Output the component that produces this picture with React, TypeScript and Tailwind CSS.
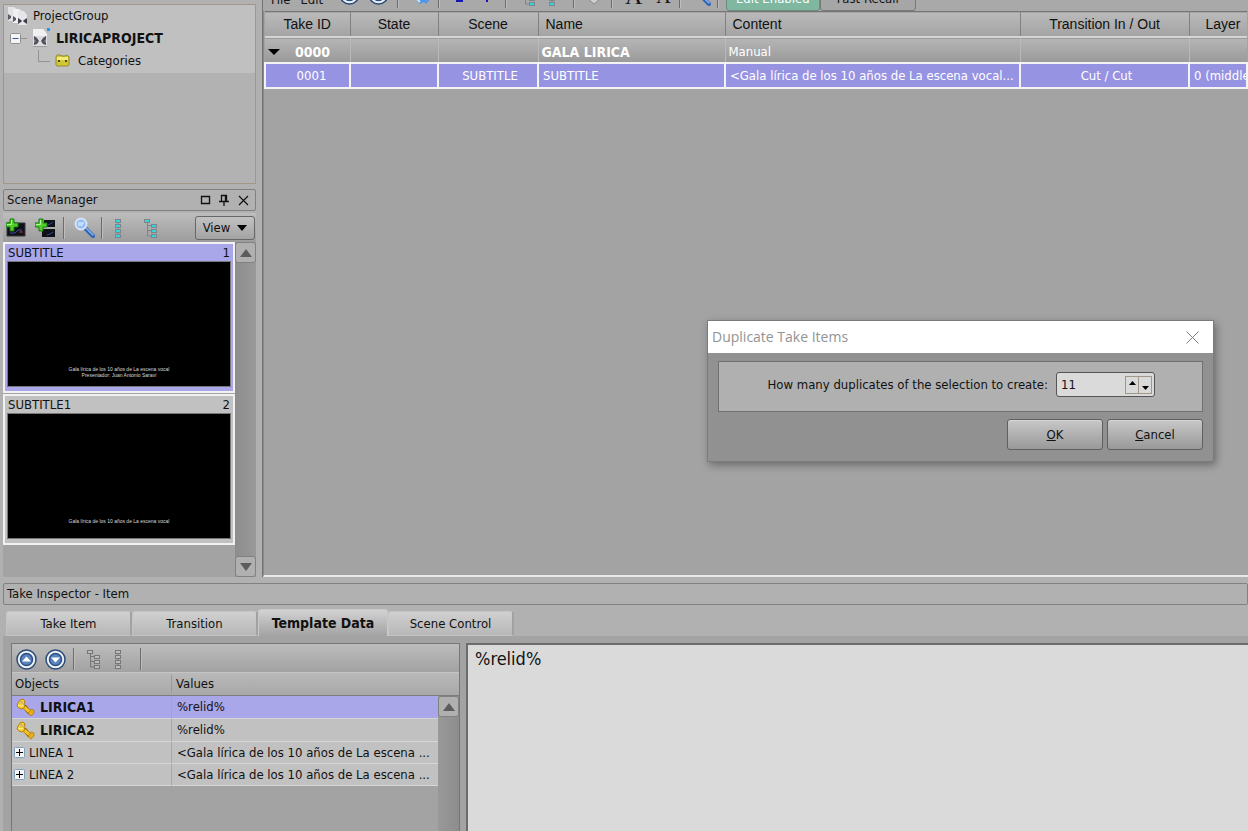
import { useState, type ReactNode } from 'react'

const scenes = [
  { name: 'SUBTITLE', num: 1, lines: ['Gala lírica de los 10 años de La escena vocal', 'Presentador: Juan Antonio Saraví'], selected: true },
  { name: 'SUBTITLE1', num: 2, lines: ['Gala lírica de los 10 años de La escena vocal'], selected: false },
]

const tabs = ['Take Item', 'Transition', 'Template Data', 'Scene Control']

const objects = [
  { name: 'LIRICA1', value: '%relid%', key: true },
  { name: 'LIRICA2', value: '%relid%', key: true },
  { name: 'LINEA 1', value: '<Gala lírica de los 10 años de La escena ...', key: false },
  { name: 'LINEA 2', value: '<Gala lírica de los 10 años de La escena ...', key: false },
]

function Separator({ className = 'h-[22px]' }: { className?: string }) {
  return <span className={`w-[2px] shrink-0 border-l border-[#6c6c6c] bg-[#bdbdbd] ${className}`} />
}

function ProjectIcon() {
  return (
    <svg className="h-[20px] w-[18px]" viewBox="0 0 18 20">
      <path d="M1 1h10l4 5v13H1z" fill="#dcdce0" />
      <path d="M1 1h10l4 5v2H1z" fill="#f0f0f2" />
      <path d="M2 8l3 2 2 3-2 3-3 1zM14 8l-3 2-2 3 2 3 3 1z" fill="#50505a" />
      <path d="M2 11l2 2-2 2zM14 11l-2 2 2 2z" fill="#8a8a94" />
      <path d="M1 18.500h14" stroke="#9b9ba1" />
      <path d="M15 0h3v3h-3z" fill="#1c9cf2" />
    </svg>
  )
}

function GroupIcon() {
  return (
    <svg className="h-[20px] w-[21px]" viewBox="0 0 21 20">
      <path d="M1 1h6l4 3v11H1z" fill="#e2e2e5" />
      <path d="M1 8l3 2v2l-3 2z" fill="#5d5d67" />
      <path d="M6 3h6l4 3v11H6z" fill="#f0f0f3" />
      <path d="M6 10l3 2v2l-3 2z" fill="#5d5d67" />
      <path d="M11 5h6l3 4v10h-9z" fill="#e6e6ea" />
      <path d="M11 12l3 2 1 1-1 1-3 2zM20 12l-3 2-1 1 1 1 3 2z" fill="#40404a" />
    </svg>
  )
}

function FolderIcon() {
  return (
    <svg className="h-[13px] w-[15px]" viewBox="0 0 15 13">
      <path d="M1 3l1-2h3l2 1h3l2-1 2 2v8l-1 1H2l-1-1z" fill="#cfc832" stroke="#928b35" />
      <path d="M2 3h11v3H2z" fill="#f1ec7a" />
      <path d="M3 6h2v2H3zM10 6h2v2h-2z" fill="#4b4716" />
    </svg>
  )
}

function AddSceneIcon({ list = false }: { list?: boolean }) {
  return (
    <svg className="h-[20px] w-[20px]" viewBox="0 0 20 20">
      {list ? (
        <>
          <path d="M9 2h11v7H9zM7 11h13v8H7z" fill="#111118" />
          <path d="M13 7l2-1 3-2M12 17l3-1 3-2" stroke="#334a9c" fill="none" />
        </>
      ) : (
        <>
          <path d="M1 5h18v13H1z" fill="#111118" stroke="#34343a" />
          <path d="M4 15h5l3-3h4" stroke="#3a4ca8" fill="none" />
          <path d="M13 14h4" stroke="#a3393d" />
        </>
      )}
      <path d="M4 1h4v4h4v4H8v4H4V9H0V5h4z" fill="#4fd02b" stroke="#1c7a12" />
      <path d="M5.500 2v4.500H1" stroke="#b2f59a" fill="none" />
    </svg>
  )
}

function MagnifierIcon() {
  return (
    <svg className="h-[21px] w-[21px]" viewBox="0 0 21 21">
      <path d="M11 11l8 8" stroke="#2d62b5" strokeWidth="4" strokeLinecap="round" />
      <path d="M12 11l7 7" stroke="#86b4ec" strokeWidth="1.5" strokeLinecap="round" />
      <circle cx="7" cy="7" r="5.5" fill="#8fbdfa" stroke="#d9e2f2" strokeWidth="2" />
      <path d="M4 6h6M4 8h5" stroke="#f3f9ff" />
    </svg>
  )
}

// stacked boxes joined by a line
function StackIcon({ fill, stroke }: { fill: string; stroke: string }) {
  return (
    <svg className="h-[20px] w-[8px]" viewBox="0 0 8 20">
      {[1, 6, 11, 16].map(y => (
        <g key={y}>
          <rect x="1.5" y={y + 0.5} width="5" height="3" fill={fill} stroke={stroke} />
          <path d={`M4 ${y + 3}v2`} stroke={stroke} />
        </g>
      ))}
    </svg>
  )
}

function TreeIcon({ fill, stroke }: { fill: string; stroke: string }) {
  return (
    <svg className="h-[20px] w-[15px]" viewBox="0 0 15 20">
      <path d="M4.500 4v14h4M4.500 7.500h4M4.500 12.500h4" stroke={stroke} fill="none" />
      <rect x="1.500" y="1.500" width="5" height="3" fill={fill} stroke={stroke} />
      {[6, 11, 16].map(y => (
        <rect key={y} x="8.500" y={y + 0.5} width="5" height="3" fill={fill} stroke={stroke} />
      ))}
    </svg>
  )
}

function RoundArrow({ down = false }: { down?: boolean }) {
  return (
    <svg className="h-[21px] w-[21px]" viewBox="0 0 21 21">
      <circle cx="10.500" cy="10.500" r="9.500" fill="#edf2f8" stroke="#2c4a75" strokeWidth="1.500" />
      <circle cx="10.500" cy="10.500" r="6" fill="#5a85bd" stroke="#2c4f83" strokeWidth="1.500" />
      <path d={down ? 'M6 8.500h9l-4.500 5z' : 'M6 12.500h9l-4.500-5z'} fill="#fff" />
    </svg>
  )
}

function KeyIcon() {
  return (
    <svg className="h-[18px] w-[19px]" viewBox="0 0 19 18">
      <path d="M8 8l6 7" stroke="#96690a" strokeWidth="4.500" />
      <path d="M7 8l8 7" stroke="#f5c321" strokeWidth="3" />
      <path d="M12 15l3 3 3-3v-3l-3-1-1 2z" fill="#e8ae16" stroke="#a9760c" strokeWidth="0.700" />
      <path d="M1 8l1-3 2-3 3-1 2 2-1 3 1 3-3 2-3-1z" fill="#f8cd30" stroke="#b3810f" />
      <path d="M5 3l2 1-1 2-2-1z" fill="#b9b1a0" />
      <path d="M2 7l3 1 2-1" stroke="#fff09a" fill="none" />
    </svg>
  )
}

function ExpandBox({ open = false }: { open?: boolean }) {
  return (
    <svg className="h-[11px] w-[11px] shrink-0" viewBox="0 0 11 11">
      <rect x="0.500" y="0.500" width="10" height="10" rx="1" fill="#f4f4f4" stroke={open ? '#8f8f8f' : '#7f9fbd'} />
      <path d={open ? 'M2.500 5.500h6' : 'M2 5.500h7M5.500 2v7'} stroke={open ? '#3b53a4' : '#000'} />
    </svg>
  )
}

function ScrollButton({ down = false }: { down?: boolean }) {
  return (
    <button aria-label={down ? 'Scroll down' : 'Scroll up'} className="flex h-[21px] w-full items-center justify-center rounded-[3px] border border-[#818181] bg-[#b0b0b0]">
      <svg className="h-[8px] w-[12px]" viewBox="0 0 12 8">
        <path d={down ? 'M0 0h12L6 8z' : 'M0 8h12L6 0z'} fill="#5c5c5c" />
      </svg>
    </button>
  )
}

function PanelTitle({ children, controls }: { children: ReactNode; controls?: ReactNode }) {
  return (
    <div className="flex h-[22px] shrink-0 items-center justify-between rounded-[2px] border border-[#818181] bg-[#b1b1b1] px-[3px]">
      <h2>{children}</h2>
      {controls}
    </div>
  )
}

function ProjectTree() {
  return (
    <div className="mt-[4px] h-[180px] shrink-0 border border-[#a09786] bg-[#b2b2b2]">
      <ul className="bg-[#c0c0c0] pb-[1px]">
        <li className="flex h-[22px] items-center gap-[5px] pl-[3px]"><GroupIcon />ProjectGroup</li>
        <li className="flex h-[22px] items-center pl-[6px] text-[14px] font-bold">
          <ExpandBox open />
          <span className="w-[6px] border-t border-[#939393]" />
          <span className="mr-[6px] ml-[5px] flex"><ProjectIcon /></span>
          LIRICAPROJECT
        </li>
        <li className="flex h-[23px] items-center pl-[34px]">
          <span className="mb-[10px] h-[12px] w-[12px] border-b border-l border-[#939393]" />
          <span className="mr-[8px] ml-[5px] flex"><FolderIcon /></span>
          Categories
        </li>
      </ul>
    </div>
  )
}

function SceneManager() {
  return (
    <section className="mt-[5px] flex min-h-0 flex-1 flex-col">
      <PanelTitle
        controls={
          <svg className="mr-[3px] h-[13px] w-[50px]" viewBox="0 0 50 13" fill="none" stroke="#111">
            <path d="M2.500 2.500h8v7h-8z" strokeWidth="1.300" />
            <path d="M22.500 7V1.500h5V7M26.500 1.500V7M20 7.500h10M25 8v4" strokeWidth="1.300" />
            <path d="M40 2l9 9M49 2l-9 9" strokeWidth="1.200" />
          </svg>
        }
      >
        Scene Manager
      </PanelTitle>
      <div className="mt-[2px] flex h-[29px] shrink-0 items-center bg-linear-to-b from-[#bdbdbd] to-[#9c9c9c] pl-[3px]">
        <button aria-label="Add scene"><AddSceneIcon /></button>
        <button aria-label="Add scene list" className="ml-[9px]"><AddSceneIcon list /></button>
        <Separator className="ml-[8px] h-[22px]" />
        <button aria-label="Find" className="ml-[9px]"><MagnifierIcon /></button>
        <Separator className="ml-[6px] h-[22px]" />
        <button aria-label="Collapse" className="ml-[11px]"><StackIcon fill="#35d5df" stroke="#7c8688" /></button>
        <button aria-label="Expand" className="ml-[21px]"><TreeIcon fill="#35d5df" stroke="#7c8688" /></button>
        <button className="mr-[1px] ml-auto flex h-[24px] w-[60px] items-center justify-center gap-[7px] rounded-[3px] border border-[#666] bg-linear-to-b from-[#c2c2c2] to-[#a3a3a3]">
          View
          <svg className="h-[6px] w-[10px]" viewBox="0 0 10 6"><path d="M0 0h10L5 6z" /></svg>
        </button>
      </div>
      <div className="flex min-h-0 flex-1 bg-[#a3a3a3]">
        <ul className="flex min-w-0 flex-1 flex-col gap-[1px]">
          {scenes.map(s => (
            <li key={s.num} className={`h-[151px] border-2 border-[#f1f1f1] px-[2px] ${s.selected ? 'bg-[#a9a6e9]' : 'bg-[#c1c1c1]'}`}>
              <div className="flex h-[17px] items-center justify-between px-[1px]">
                <span>{s.name}</span>
                <span>{s.num}</span>
              </div>
              <div className="flex h-[126px] flex-col items-center border border-[#777] bg-black pt-[104px] font-['Liberation_Sans'] text-[5px] leading-[6px] text-[#d8d8d8]">
                {s.lines.map(l => <span key={l}>{l}</span>)}
              </div>
            </li>
          ))}
        </ul>
        <div className="flex w-[21px] flex-col justify-between bg-linear-to-r from-[#8d8d8d] to-[#999]">
          <ScrollButton />
          <ScrollButton down />
        </div>
      </div>
    </section>
  )
}

// only the bottom edge of this bar stays in view
function Toolbar() {
  return (
    <div className="flex h-[11px] shrink-0 items-end overflow-hidden bg-[#a9a9a9]">
      <div className="mb-[3px] flex w-[76px] gap-[10px] pl-[8px] leading-[16px]">
        <span>File</span>
        <span>Edit</span>
      </div>
      <span className="mb-[6px] flex gap-[8px]"><RoundArrow /><RoundArrow down /></span>
      <Separator className="mb-[3px] ml-[8px] h-[22px]" />
      <svg className="mb-[6px] ml-[12px] h-[18px] w-[22px]" viewBox="0 0 22 18">
        <path d="M1 8l8 9 4-2 2 2 7-8V0H1z" fill="#4a97e8" />
        <path d="M11 6l4 8 6-5V0h-8z" fill="#a793e6" />
        <path d="M3 9l6 6" stroke="#c6e6ff" strokeWidth="2" />
      </svg>
      <Separator className="mb-[3px] ml-[5px] h-[22px]" />
      <svg className="mb-[9px] ml-[16px] h-[12px] w-[36px]" viewBox="0 0 36 12">
        <path d="M0 11h7M31 0v12" stroke="#1616b4" strokeWidth="2" />
      </svg>
      <Separator className="mb-[3px] ml-[13px] h-[22px]" />
      <span className="mb-[5px] ml-[14px] flex gap-[12px]">
        <TreeIcon fill="#35d5df" stroke="#7c8688" />
        <StackIcon fill="#35d5df" stroke="#7c8688" />
      </span>
      <Separator className="mb-[3px] ml-[17px] h-[22px]" />
      <svg className="mb-[7px] ml-[12px] h-[12px] w-[14px]" viewBox="0 0 14 12"><path d="M0 6l7 6 7-6-3-6H3z" fill="#d0d0d0" stroke="#888" /></svg>
      <Separator className="mb-[3px] ml-[10px] h-[22px]" />
      <span className="mb-[6px] ml-[12px] flex gap-[14px] font-['Liberation_Serif'] text-[24px] leading-[18px]">
        <span>A</span>
        <span className="text-[20px]">A</span>
      </span>
      <Separator className="mb-[3px] ml-[8px] h-[22px]" />
      <span className="mb-[5px] ml-[9px]"><MagnifierIcon /></span>
      <Separator className="mb-[3px] ml-[6px] h-[22px]" />
      <button className="ml-[7px] h-[24px] w-[94px] shrink-0 rounded-[3px] border border-[#6c8a7e] bg-[#7fb7a0] leading-[16px] text-white">Edit Enabled</button>
      <button className="h-[24px] w-[96px] shrink-0 rounded-[3px] border border-[#787878] bg-[#a6a6a6] leading-[16px]">Fast Recall</button>
    </div>
  )
}

const th = 'border-r border-[#818181] px-[7px] font-normal'
const groupTd = 'border-r border-[#b9b9b9] px-[3px] pt-[4px]'
const takeTd = 'overflow-hidden border-2 border-[#f3f3f3] bg-[#9793e3] pt-[1px] pl-[4px] whitespace-nowrap'

function TakeList() {
  return (
    <section className="flex min-w-0 flex-1 flex-col border-l border-[#737373]">
      <Toolbar />
      <div className="flex-1 overflow-hidden border-b-2 border-l border-[#e8e8e8] border-l-[#8a8a8a] bg-[#a3a3a3]">
        <table className="w-full table-fixed border-collapse">
          <colgroup>
            <col className="w-[85px]" />
            <col className="w-[88px]" />
            <col className="w-[100px]" />
            <col className="w-[187px]" />
            <col />
            <col className="w-[169px]" />
            <col className="w-[58px]" />
          </colgroup>
          <thead className="font-['Liberation_Sans'] text-[14px]">
            <tr className="h-[25px] border-t border-b border-[#757575] bg-linear-to-b from-[#bababa] to-[#a4a4a4]">
              <th className={th}>Take ID</th>
              <th className={th}>State</th>
              <th className={th}>Scene</th>
              <th className={`${th} text-left`}>Name</th>
              <th className={`${th} text-left`}>Content</th>
              <th className={th}>Transition In / Out</th>
              <th className="pl-[16px] text-left font-normal">Layer</th>
            </tr>
          </thead>
          <tbody className="text-white">
            <tr className="h-[26px] border-t-2 border-[#d4d4d4] bg-linear-to-b from-[#b5b5b5] to-[#999]">
              <td className={`${groupTd} text-[14px] font-bold`}>
                <span className="flex items-center gap-[15px]">
                  <svg className="h-[6px] w-[12px]" viewBox="0 0 12 6"><path d="M0 0h12L6 6z" /></svg>
                  0000
                </span>
              </td>
              <td className={groupTd} />
              <td className={groupTd} />
              <td className={`${groupTd} text-[14px] font-bold`}>GALA LIRICA</td>
              <td className={groupTd}>Manual</td>
              <td className={groupTd} />
              <td />
            </tr>
            <tr className="h-[25px]">
              <td className={`${takeTd} pl-[8px] text-center`}>0001</td>
              <td className={takeTd} />
              <td className={`${takeTd} text-center`}>SUBTITLE</td>
              <td className={takeTd}>SUBTITLE</td>
              <td className={takeTd}>{'<Gala lírica de los 10 años de La escena vocal...'}</td>
              <td className={`${takeTd} text-center`}>Cut / Cut</td>
              <td className={takeTd}>0 (middle)</td>
            </tr>
          </tbody>
        </table>
      </div>
    </section>
  )
}

function TakeInspector() {
  const [tab, setTab] = useState('Template Data')
  return (
    <section className="flex h-[248px] shrink-0 flex-col pl-[3px]">
      <PanelTitle>Take Inspector - Item</PanelTitle>
      <div role="tablist" className="flex h-[31px] shrink-0 items-end pl-[3px]">
        {tabs.map(t => (
          <button
            key={t}
            role="tab"
            aria-selected={t === tab}
            onClick={() => setTab(t)}
            className={t === tab
              ? 'h-[27px] w-[130px] rounded-t-[3px] border border-b-0 border-[#c9c9c9] bg-linear-to-b from-[#d2d2d2] to-[#a3a3a3] text-[14px] font-bold'
              : 'h-[25px] w-[126px] rounded-t-[3px] border border-r-2 border-[#c4c4c4] border-r-[#a2a2a2] bg-linear-to-b from-[#d0d0d0] to-[#b7b7b7]'}
          >
            {t}
          </button>
        ))}
      </div>
      <div className="flex min-h-0 flex-1 gap-[6px] bg-[#a3a3a3] pt-[7px] pl-[8px]">
        <div className="flex w-[449px] shrink-0 flex-col border border-b-0 border-[#767676]">
          <div className="flex h-[28px] shrink-0 items-center bg-linear-to-b from-[#bcbcbc] to-[#a2a2a2] pt-[2px] pl-[4px]">
            <button aria-label="Previous"><RoundArrow /></button>
            <button aria-label="Next" className="ml-[8px]"><RoundArrow down /></button>
            <Separator className="ml-[7px] h-[22px]" />
            <button aria-label="Expand" className="ml-[11px]"><TreeIcon fill="#bdbdbd" stroke="#777" /></button>
            <button aria-label="Collapse" className="ml-[13px]"><StackIcon fill="#bdbdbd" stroke="#777" /></button>
            <Separator className="ml-[18px] h-[22px]" />
          </div>
          <div className="flex h-[24px] shrink-0 items-center border-t border-b border-[#c4c4c4] border-b-[#7d7d7d] bg-linear-to-b from-[#b9b9b9] to-[#a8a8a8]">
            <span className="w-[160px] border-r border-[#999] pl-[3px]">Objects</span>
            <span className="pl-[4px]">Values</span>
          </div>
          <div className="flex min-h-0 flex-1">
            <div className="min-w-0 flex-1">
              <table className="w-full table-fixed border-separate border-spacing-0">
                <colgroup>
                  <col className="w-[160px]" />
                  <col />
                </colgroup>
                <tbody>
                  {objects.map((o, i) => (
                    <tr key={o.name} className={`${o.key ? 'h-[23px]' : 'h-[22px]'} ${i === 0 ? 'bg-[#a9a6e9]' : 'bg-[#c1c1c1]'}`}>
                      <td className="border-r border-b border-[#d6d6d6] border-r-[#a8a8a8] p-0">
                        <span className={o.key ? 'flex items-center gap-[5px] pl-[4px] text-[14px] font-bold' : 'flex items-center gap-[4px] pl-[2px]'}>
                          {o.key ? <KeyIcon /> : <ExpandBox />}
                          {o.name}
                        </span>
                      </td>
                      <td className="overflow-hidden border-b border-[#d6d6d6] py-0 pl-[5px] whitespace-nowrap">{o.value}</td>
                    </tr>
                  ))}
                </tbody>
              </table>
            </div>
            <div className="w-[21px] bg-linear-to-r from-[#999] to-[#8d8d8d]"><ScrollButton /></div>
          </div>
        </div>
        <textarea
          aria-label="Value"
          defaultValue="%relid%"
          className="min-w-0 flex-1 resize-none border-t-2 border-l-2 border-[#6c6c6c] bg-[#dadada] px-[7px] py-[2px] text-[18px] leading-[24px] outline-none"
        />
      </div>
    </section>
  )
}

const dialogButton = 'h-[31px] w-[96px] rounded-[3px] border border-[#5f5f5f] bg-linear-to-b from-[#c8c8c8] to-[#999] shadow-[inset_0_1px_0_#d5d5d5]'

function DuplicateDialog() {
  const [count, setCount] = useState(11)
  return (
    <div role="dialog" aria-label="Duplicate Take Items" className="absolute top-[320px] right-[34px] w-[507px] border border-[#7b7b7b] bg-[#919191] shadow-[2px_3px_8px_rgba(0,0,0,0.35)]">
      <div className="flex h-[32px] items-center justify-between bg-white pr-[14px] pl-[4px] font-['Open_Sans'] text-[14px] text-[#939393]">
        <h2>Duplicate Take Items</h2>
        <button aria-label="Close">
          <svg className="h-[13px] w-[13px]" viewBox="0 0 13 13"><path d="M0.500 0.500l12 12M12.500 0.500l-12 12" stroke="#7c7c7c" /></svg>
        </button>
      </div>
      <div className="mx-[10px] mt-[8px] flex h-[51px] items-center justify-end gap-[8px] border border-[#707070] bg-[#b0b0b0] pr-[47px] pb-[4px]">
        <label htmlFor="count">How many duplicates of the selection to create:</label>
        <div className="flex h-[25px] w-[99px] items-center rounded-[3px] border border-[#555] bg-[#dadada] pr-[2px]">
          <input id="count" inputMode="numeric" value={count} onChange={e => setCount(Number(e.target.value) || 0)} className="min-w-0 flex-1 pl-[4px] outline-none" />
          <div className="flex h-[18px] w-[27px] border border-[#a09786]">
            <button aria-label="More" onClick={() => setCount(count + 1)} className="flex flex-1 justify-center border-r border-[#a09786] pt-[4px]">
              <svg className="h-[4px] w-[7px]" viewBox="0 0 7 4"><path d="M0 4h7L3.500 0z" /></svg>
            </button>
            <button aria-label="Fewer" onClick={() => setCount(count - 1)} className="flex flex-1 items-end justify-center pb-[3px]">
              <svg className="h-[4px] w-[7px]" viewBox="0 0 7 4"><path d="M0 0h7L3.500 4z" /></svg>
            </button>
          </div>
        </div>
      </div>
      <div className="flex justify-end gap-[4px] pt-[7px] pr-[10px] pb-[11px]">
        <button className={dialogButton}><u>O</u>K</button>
        <button className={dialogButton}><u>C</u>ancel</button>
      </div>
    </div>
  )
}

export default function App() {
  return (
    <div className="relative flex h-screen flex-col overflow-hidden bg-[#b1b1b1] font-['DejaVu_Sans_Condensed','Noto_Sans',sans-serif] text-[13px] leading-[18px] text-[#111]">
      <div className="flex min-h-0 flex-1 pb-[6px]">
        <aside className="mr-[6px] flex w-[256px] shrink-0 flex-col pl-[3px]">
          <ProjectTree />
          <SceneManager />
        </aside>
        <TakeList />
      </div>
      <TakeInspector />
      <DuplicateDialog />
    </div>
  )
}
